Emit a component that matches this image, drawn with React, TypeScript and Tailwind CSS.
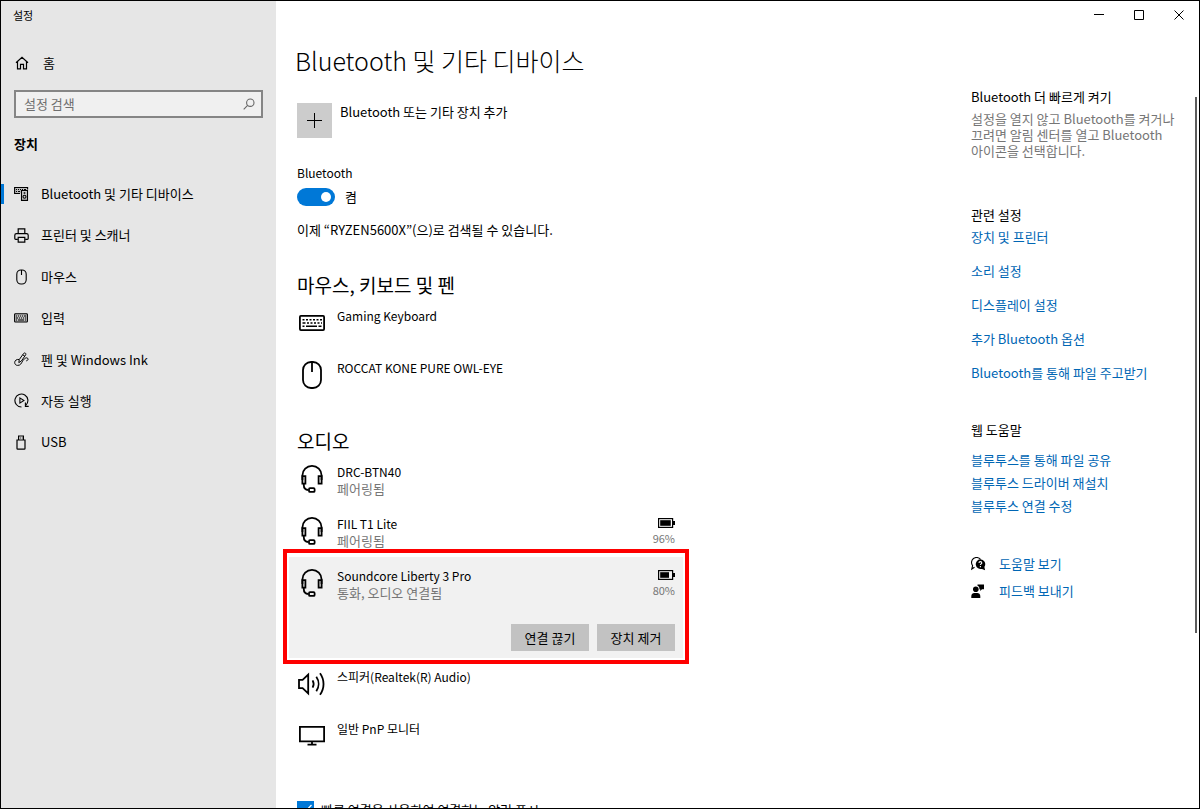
import { useState } from "react";
import type { ReactElement, ReactNode } from "react";
import clsx from "clsx";

type IconProps = { className?: string };

const stroke = { fill: "none", stroke: "currentColor" } as const;

function HomeIcon(): ReactElement {
  return (
    <svg width="14" height="14" viewBox="0 0 14 14" {...stroke} strokeWidth="1.2">
      <path d="M1 6.8 7 1.2l6 5.6M2.5 5.6v7.2h3V8.4h3v4.4h3V5.6" />
    </svg>
  );
}

function SearchIcon({ className }: IconProps): ReactElement {
  return (
    <svg className={className} width="12" height="12" viewBox="0 0 12 12" {...stroke} strokeWidth="1.1">
      <circle cx="7.3" cy="4.7" r="3.7" />
      <path d="M4.6 7.4.7 11.3" />
    </svg>
  );
}

function DevicesIcon(): ReactElement {
  return (
    <svg width="15" height="15" viewBox="0 0 15 15" {...stroke} strokeWidth="1.1">
      <path d="M6 7.5H.6v-6h13v2" fill="#bbb" />
      <path d="M2 3.5h1m1 0h1m1 0h1m1 0h1m1 0h2M2 5.5h1m1 0h2" />
      <path d="M7.5 4.5h6v9.900h-6z" fill="#ccc" />
      <circle cx="10.5" cy="10.7" r="1.5" />
      <path d="M9.700 7h1.600" strokeWidth="1.5" />
    </svg>
  );
}

function PrinterIcon(): ReactElement {
  return (
    <svg width="15" height="15" viewBox="0 0 15 15" {...stroke} strokeWidth="1.2">
      <path d="M4.2 5.5V.9h6.6v4.6M3.8 11.4H1.6a.8.8 0 0 1-.8-.8V7.2c0-.9.7-1.6 1.6-1.6h10.2c.9 0 1.6.7 1.6 1.6v3.4c0 .5-.3.8-.8.8h-2.2" />
      <path d="M4.2 9.3h6.6v4.8H4.2z" />
    </svg>
  );
}

function MouseIcon({ className }: IconProps): ReactElement {
  return (
    <svg className={className} width="11" height="16" viewBox="0 0 11 16" {...stroke} strokeWidth="1.1">
      <rect x=".8" y="1" width="9.4" height="14" rx="4.2" />
      <path d="M5.5 1v5" />
    </svg>
  );
}

function TypingIcon(): ReactElement {
  return (
    <svg width="14" height="10" viewBox="0 0 14 10" {...stroke} strokeWidth="1.1">
      <rect x=".6" y=".8" width="12.8" height="8.2" rx=".8" fill="#bbb" />
      <path d="M2 3h1m1 0h1m1 0h1m1 0h1m1 0h2M2 5h2m1 0h1m1 0h1m1 0h1m1 0h1M2 7h1m1 0h6m1 0h1" />
    </svg>
  );
}

function PenIcon(): ReactElement {
  return (
    <svg width="15" height="15" viewBox="0 0 15 15" {...stroke} strokeWidth="1">
      <path d="M4.8 10.600 5.300 7.500l4.200-5.900c.5-.7 1.300-.8 1.900-.4s.6 1.200.1 1.900L7.400 9z" />
      <path d="m8.900 2.900 2 1.400" />
      <path d="M5 7.500c-2.300-.5-4.300 1-4.300 3 0 1.700 1.200 2.900 2.900 2.900 3.100 0 3.500-1.900 5-4.300 1.300-2.200 3.600-4.100 5-2.900 1.100 1 .2 2.400-1.300 2.700" />
    </svg>
  );
}

function AutoPlayIcon(): ReactElement {
  return (
    <svg width="15" height="15" viewBox="0 0 15 15" {...stroke} strokeWidth="1.1">
      <path d="M7.500 14A6.500 6.500 0 1 1 11.800 12.300" />
      <path d="M11.400 9.500v3.900h3.300" />
      <path d="M5.900 4.900v5.200l4-2.600z" />
    </svg>
  );
}

function UsbIcon(): ReactElement {
  return (
    <svg width="10" height="15" viewBox="0 0 10 15" {...stroke} strokeWidth="1.2">
      <path d="M1 5h8v8.400c0 .4-.3.700-.7.700H1.700c-.4 0-.7-.3-.7-.7zM2.600 5V1h4.800v4" />
      <path d="M4 3h.8m1 0h.7" />
    </svg>
  );
}

function KeyboardDevice(): ReactElement {
  return (
    <svg width="26" height="16" viewBox="0 0 26 16" {...stroke} strokeWidth="1.8">
      <rect x=".9" y=".9" width="24.2" height="14.2" rx="1" />
      <path d="M3.5 4.8h2m1.5 0h2m1.5 0h2m1.5 0h2m1.5 0h2m1.5 0h2" strokeWidth="1.5" />
      <path d="M3.5 8h3m1.5 0h2m1.5 0h2m1.5 0h2m1.5 0h2m1.5 0h1" strokeWidth="1.5" />
      <path d="M3.5 11.3h2m1.5 0h11m1.5 0h3" strokeWidth="1.5" />
    </svg>
  );
}

function MouseDevice(): ReactElement {
  return (
    <svg width="20" height="28" viewBox="0 0 20 28" {...stroke} strokeWidth="1.8">
      <rect x="1" y="1" width="18" height="26" rx="8" />
      <path d="M10 1v10" />
    </svg>
  );
}

function HeadsetDevice(): ReactElement {
  return (
    <svg width="22" height="28" viewBox="0 0 22 28" {...stroke} strokeWidth="1.8">
      <path d="M1.4 15V10.5a9.6 9.6 0 0 1 19.2 0V15" />
      <path d="M1.4 11.2h3v7.4h-3zM17.6 11.2h3v7.4h-3z" />
      <path d="M2.8 18.8v1.4c0 2.8 1.6 4.6 4.6 4.8" />
      <rect x="8" y="23.2" width="5.6" height="3.7" rx="1" />
    </svg>
  );
}

function SpeakerDevice(): ReactElement {
  return (
    <svg width="28" height="24" viewBox="0 0 28 24" {...stroke} strokeWidth="1.8">
      <path d="M1 7.800h3.600l5.600-5.200v18.800l-5.600-5.200H1z" />
      <path d="M14.600 8.400c1.300 2.200 1.300 5 0 7.200M18.300 4.800c3 4.300 3 10.100 0 14.400M22 1.200c4.700 6.500 4.700 15.100 0 21.600" />
    </svg>
  );
}

function MonitorDevice(): ReactElement {
  return (
    <svg width="26" height="20" viewBox="0 0 26 20" {...stroke} strokeWidth="1.8">
      <path d="M.9.900h24.200v14.400H.9zM13 15.300v3M8.500 18.600h9" />
    </svg>
  );
}

function BatteryIcon({ level }: { level: number }): ReactElement {
  return (
    <svg width="17" height="10" viewBox="0 0 17 10">
      <rect x=".6" y=".6" width="14" height="8.8" fill="none" stroke="currentColor" strokeWidth="1.2" />
      <rect x="2.2" y="2.2" width={(level / 100) * 11} height="5.6" fill="currentColor" />
      <rect x="15" y="3" width="2" height="4" fill="currentColor" />
    </svg>
  );
}

function HelpIcon(): ReactElement {
  return (
    <svg width="15" height="14" viewBox="0 0 15 14">
      <path
        d="M3.500 10.200.800 12l.8-3.400A4.600 4.600 0 1 1 9.500 2.400"
        fill="none"
        stroke="currentColor"
        strokeWidth="1.1"
      />
      <path d="M9.300 2.300a4.900 4.900 0 0 1 4.100 7.600l.7 3.300-3.100-1.300A4.900 4.900 0 1 1 9.300 2.300z" fill="currentColor" />
      <path d="M7.900 5.900c.1-1.700 2.900-1.700 2.900 0 0 1-1.400 1.100-1.400 2.200M9.400 9.100v1.100" fill="none" stroke="#fff" strokeWidth="1.1" />
    </svg>
  );
}

function FeedbackIcon(): ReactElement {
  return (
    <svg width="14" height="14" viewBox="0 0 14 14" fill="currentColor">
      <circle cx="4.8" cy="5.3" r="2.8" />
      <path d="M.300 14V12c0-2 1.500-3 3-3h3c1.500 0 3 1 3 3v2z" />
      <path d="M6.500.500H13v4.800h-2L9.200 7V5.300h-.8C8.600 3.500 7.900 2.300 6.500 1.800z" />
    </svg>
  );
}

const navItems = [
  { label: "Bluetooth 및 기타 디바이스", icon: <DevicesIcon /> },
  { label: "프린터 및 스캐너", icon: <PrinterIcon /> },
  { label: "마우스", icon: <MouseIcon /> },
  { label: "입력", icon: <TypingIcon /> },
  { label: "펜 및 Windows Ink", icon: <PenIcon /> },
  { label: "자동 실행", icon: <AutoPlayIcon /> },
  { label: "USB", icon: <UsbIcon /> },
];

const relatedLinks = [
  "장치 및 프린터",
  "소리 설정",
  "디스플레이 설정",
  "추가 Bluetooth 옵션",
  "Bluetooth를 통해 파일 주고받기",
];

const webLinks = ["블루투스를 통해 파일 공유", "블루투스 드라이버 재설치", "블루투스 연결 수정"];

function Sidebar(): ReactElement {
  return (
    <aside className="flex w-[275px] shrink-0 flex-col bg-[#e6e6e6]">
      <div className="mt-1.5 pl-3 text-[11px] leading-4">설정</div>
      <a href="#home" className="mt-8 flex items-center gap-3.5 pl-3.5 leading-4">
        <HomeIcon />
        홈
      </a>
      <div className="relative mx-[13px] mt-[19px]">
        <input
          type="text"
          aria-label="설정 검색"
          placeholder="설정 검색"
          className="block h-7 w-full border-2 border-[#858585] bg-[#f0f0f0] pr-8 pb-0.5 pl-2 outline-none placeholder:text-[#6e6e6e]"
        />
        <SearchIcon className="absolute top-2 right-2 text-[#666]" />
      </div>
      <h2 className="mt-[18px] pl-[13px] leading-4 font-bold">장치</h2>
      <nav className="mt-[21px] flex h-[290px] flex-col">
        {navItems.map((item, index) => (
          <a key={item.label} href="#nav" className="relative flex flex-1 items-center gap-3 pl-3">
            {index === 0 && <span className="absolute left-0 h-5 w-[3px] bg-[#0078d7]" />}
            <span className="flex w-4 justify-center">{item.icon}</span>
            {item.label}
          </a>
        ))}
      </nav>
    </aside>
  );
}

function WindowControls(): ReactElement {
  return (
    <header className="flex h-7 justify-end">
      <button aria-label="최소화" className="flex w-10 items-center justify-center">
        <svg width="10" height="10" viewBox="0 0 10 10" {...stroke}>
          <path d="M0 4.500h10" />
        </svg>
      </button>
      <button aria-label="최대화" className="flex w-10 items-center justify-center">
        <svg width="10" height="10" viewBox="0 0 10 10" {...stroke}>
          <path d="M.500.500h9v9h-9z" />
        </svg>
      </button>
      <button aria-label="닫기" className="flex w-10 items-center justify-center">
        <svg width="10" height="10" viewBox="0 0 10 10" {...stroke}>
          <path d="m.500.500 9 9m0-9-9 9" />
        </svg>
      </button>
    </header>
  );
}

type DeviceProps = {
  icon: ReactNode;
  name: string;
  status?: string;
  battery?: number;
  selected?: boolean;
};

function Device({ icon, name, status, battery, selected }: DeviceProps): ReactElement {
  return (
    <li className={clsx("relative -mx-2 px-2", selected && "bg-[#f1f1f1]")}>
      <div className="flex h-[52px]">
        <div className="flex w-[30px] shrink-0 items-center justify-center">{icon}</div>
        <div className="flex-1 pt-2.5 pl-2.5 leading-[17px]">
          <div className="text-xs leading-[17px]">{name}</div>
          {status && <div className="text-[#767676]">{status}</div>}
        </div>
        {battery !== undefined && (
          <div className="flex flex-col items-end pt-[13px]">
            <BatteryIcon level={battery} />
            <span className="mt-0.5 text-[11px] leading-4 text-[#767676]">{battery}%</span>
          </div>
        )}
      </div>
      {selected && (
        <>
          <div className="flex justify-end gap-2 pt-[15px] pb-[7px]">
            <button className="h-[27px] w-[78px] bg-[#c2c2c2]">연결 끊기</button>
            <button className="h-[27px] w-[78px] bg-[#c2c2c2]">장치 제거</button>
          </div>
          <div className="pointer-events-none absolute -inset-x-1.5 -top-2 -bottom-1.5 border-4 border-[#fe0000]" />
        </>
      )}
    </li>
  );
}

function DeviceSection({ title, children }: { title: string; children: ReactNode }): ReactElement {
  return (
    <section>
      <h2 className="text-[19px] leading-6">{title}</h2>
      <ul>{children}</ul>
    </section>
  );
}

function BluetoothSettings(): ReactElement {
  const [enabled, setEnabled] = useState(true);
  const [notify, setNotify] = useState(true);

  return (
    <main className="w-[378px] shrink-0">
      <h1 className="mt-[13px] -ml-0.5 text-[25px] leading-9 font-light whitespace-nowrap">
        Bluetooth 및 기타 디바이스
      </h1>

      <button className="mt-[25px] flex items-start gap-2 text-left">
        <span className="flex size-[35px] items-center justify-center bg-[#ccc]">
          <svg width="15" height="15" viewBox="0 0 15 15" {...stroke}>
            <path d="M7.500 0v15M0 7.500h15" />
          </svg>
        </span>
        <span className="mt-px leading-4">Bluetooth 또는 기타 장치 추가</span>
      </button>

      <label htmlFor="bluetooth" className="mt-[27px] block text-xs leading-4">
        Bluetooth
      </label>
      <div className="mt-[7px] flex h-[18px] items-center gap-2.5">
        <input
          id="bluetooth"
          type="checkbox"
          role="switch"
          checked={enabled}
          onChange={(e) => setEnabled(e.target.checked)}
          className="flex h-[18px] w-[38px] appearance-none items-center rounded-full bg-[#999] px-1 before:size-[10px] before:rounded-full before:bg-white checked:justify-end checked:bg-[#0078d7]"
        />
        <span>{enabled ? "켬" : "끔"}</span>
      </div>
      <p className="mt-4 leading-4">이제 “RYZEN5600X”(으)로 검색될 수 있습니다.</p>

      <div className="mt-[35px] flex flex-col gap-7">
        <DeviceSection title="마우스, 키보드 및 펜">
          <Device icon={<KeyboardDevice />} name="Gaming Keyboard" />
          <Device icon={<MouseDevice />} name="ROCCAT KONE PURE OWL-EYE" />
        </DeviceSection>
        <DeviceSection title="오디오">
          <Device icon={<HeadsetDevice />} name="DRC-BTN40" status="페어링됨" />
          <Device icon={<HeadsetDevice />} name="FIIL T1 Lite" status="페어링됨" battery={96} />
          <Device icon={<HeadsetDevice />} name="Soundcore Liberty 3 Pro" status="통화, 오디오 연결됨" battery={80} selected />
          <Device icon={<SpeakerDevice />} name="스피커(Realtek(R) Audio)" />
          <Device icon={<MonitorDevice />} name="일반 PnP 모니터" />
        </DeviceSection>
      </div>

      <label className="mt-[39px] flex items-center gap-[7px] leading-4">
        <span className="relative">
          <input
            type="checkbox"
            checked={notify}
            onChange={(e) => setNotify(e.target.checked)}
            className="block size-[17px] appearance-none border-2 border-[#333] checked:border-[#0078d7] checked:bg-[#0078d7]"
          />
          <svg className="pointer-events-none absolute inset-0 text-white" width="17" height="17" viewBox="0 0 17 17" {...stroke}>
            <path d="m3 8.500 3.500 4L14.500 4" strokeWidth="1.3" />
          </svg>
        </span>
        빠른 연결을 사용하여 연결하는 알림 표시
      </label>
    </main>
  );
}

function RelatedPanel(): ReactElement {
  return (
    <aside className="mt-[60px] w-[228px] shrink-0 leading-4">
      <h3>Bluetooth 더 빠르게 켜기</h3>
      <p className="mt-1.5 w-[210px] break-keep text-[#767676]">
        설정을 열지 않고 Bluetooth를 켜거나 끄려면 알림 센터를 열고 Bluetooth 아이콘을 선택합니다.
      </p>

      <h3 className="mt-12">관련 설정</h3>
      <ul className="mt-1.5 flex flex-col gap-[18px] text-[#0066b4]">
        {relatedLinks.map((link) => (
          <li key={link}>
            <a href="#related">{link}</a>
          </li>
        ))}
      </ul>

      <h3 className="mt-[41px]">웹 도움말</h3>
      <ul className="mt-3.5 flex flex-col gap-[7px] text-[#0066b4]">
        {webLinks.map((link) => (
          <li key={link}>
            <a href="#web">{link}</a>
          </li>
        ))}
      </ul>

      <div className="mt-[42px] flex flex-col gap-[11px]">
        <a href="#help" className="flex items-center gap-[13px]">
          <HelpIcon />
          <span className="text-[#0066b4]">도움말 보기</span>
        </a>
        <a href="#feedback" className="flex items-center gap-3.5">
          <FeedbackIcon />
          <span className="text-[#0066b4]">피드백 보내기</span>
        </a>
      </div>
    </aside>
  );
}

export default function App(): ReactElement {
  return (
    <div className="flex h-screen overflow-hidden border border-black bg-white font-['Noto_Sans_CJK_KR',sans-serif] text-[13px] text-black">
      <Sidebar />
      <div className="flex min-w-0 flex-1 flex-col">
        <WindowControls />
        <div className="relative flex min-h-0 flex-1 justify-between pl-[21px]">
          <BluetoothSettings />
          <RelatedPanel />
          <div className="absolute top-[68px] right-0.5 h-[536px] w-0.5 bg-[#5d5d5d]" />
        </div>
      </div>
    </div>
  );
}
